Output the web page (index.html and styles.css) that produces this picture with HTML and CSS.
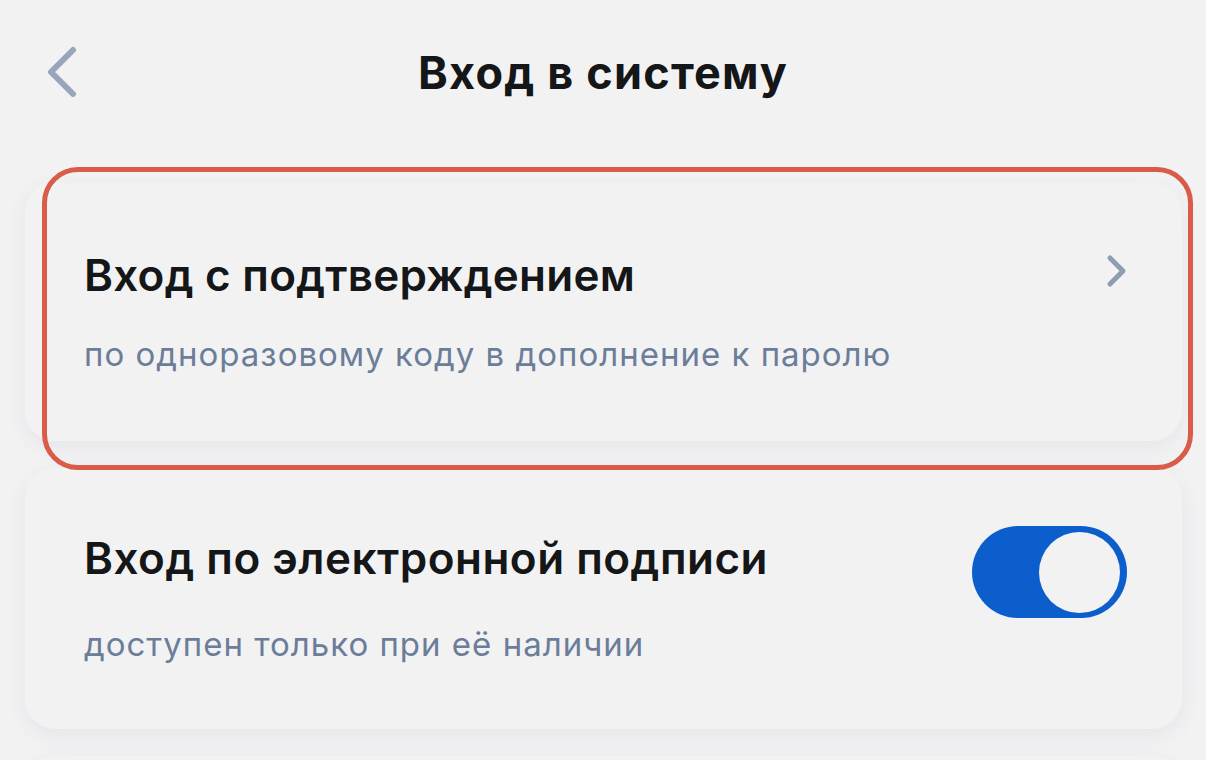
FILE: index.html
```html
<!DOCTYPE html>
<html lang="ru">
<head>
<meta charset="utf-8">
<link rel="stylesheet" href="styles.css">
</head>
<body>
<div class="screen">
  <header class="nav">
    <button class="back" aria-label="Назад">
      <svg width="34" height="52" viewBox="0 0 34 52"><path d="M28 4 L6 26 L28 48" fill="none" stroke="#97a6bb" stroke-width="6" stroke-linecap="round" stroke-linejoin="round"/></svg>
    </button>
    <h1 class="title">Вход в систему</h1>
    <span class="spacer"></span>
  </header>
  <main class="list">
    <section class="card card-first">
      <div class="card-text">
        <div class="card-title">Вход с подтверждением</div>
        <div class="card-sub">по одноразовому коду в дополнение к паролю</div>
      </div>
      <svg class="chev" width="22" height="34" viewBox="0 0 22 34"><path d="M4 4 L17 17 L4 30" fill="none" stroke="#8f9db3" stroke-width="5" stroke-linecap="round" stroke-linejoin="round"/></svg>
    </section>
    <section class="card card-second">
      <div class="card-text">
        <div class="card-title">Вход по электронной подписи</div>
        <div class="card-sub">доступен только при её наличии</div>
      </div>
      <span class="toggle"><span class="knob"></span></span>
    </section>
    <section class="card"></section>
  </main>
  <div class="highlight"></div>
</div>
</body>
</html>
```
FILE: styles.css
```css
html, body {
  margin: 0;
  padding: 0;
  background: #f2f2f3;
}
body {
  font-family: Inter, Roboto, "Noto Sans", "Liberation Sans", sans-serif;
  color: #141618;
}
.screen {
  position: relative;
  width: 1206px;
  height: 760px;
  overflow: hidden;
}
.nav {
  display: grid;
  grid-template-columns: 120px 1fr 120px;
  align-items: center;
  height: 144px;
}
.back {
  border: 0;
  background: none;
  padding: 0 0 0 45px;
  height: 52px;
  display: flex;
  align-items: center;
  justify-self: start;
}
.title {
  margin: 0;
  text-align: center;
  font-size: 45px;
  font-weight: 700;
  line-height: 1;
  letter-spacing: 1.2px;
}
.list {
  display: flex;
  flex-direction: column;
  gap: 27px;
  padding: 39px 24px 0 25px;
}
.card {
  background: #f2f2f3;
  border-radius: 30px;
  box-shadow: 0 6px 22px rgba(70, 60, 120, 0.07);
  min-height: 258px;
  display: flex;
  align-items: flex-start;
  justify-content: space-between;
  padding: 0 56px 0 59px;
  box-sizing: border-box;
}
.card-second {
  min-height: 261px;
}
.card-text {
  padding-top: 64px;
}
.card-second .card-text {
  padding-top: 62px;
}
.card-title {
  font-size: 44px;
  font-weight: 600;
  line-height: 56px;
  letter-spacing: 0.25px;
}
.card-second .card-title {
  letter-spacing: 0.5px;
}
.card-sub {
  margin-top: 31px;
  font-size: 33px;
  line-height: 40px;
  color: #6b7d99;
  letter-spacing: 1px;
}
.card-second .card-sub {
  margin-top: 38px;
}
.chev {
  margin-top: 71px;
  margin-right: -2px;
}
.toggle {
  position: relative;
  display: block;
  width: 155px;
  height: 92px;
  border-radius: 46px;
  background: #0b5ecb;
  margin-top: 58px;
  margin-right: -1px;
}
.knob {
  position: absolute;
  right: 7px;
  top: 6px;
  width: 81px;
  height: 81px;
  border-radius: 50%;
  background: #f2f2f3;
}
.highlight {
  position: absolute;
  left: 42px;
  top: 167px;
  width: 1151px;
  height: 303px;
  box-sizing: border-box;
  border: 5px solid #d85c48;
  border-radius: 36px;
  pointer-events: none;
}
```
